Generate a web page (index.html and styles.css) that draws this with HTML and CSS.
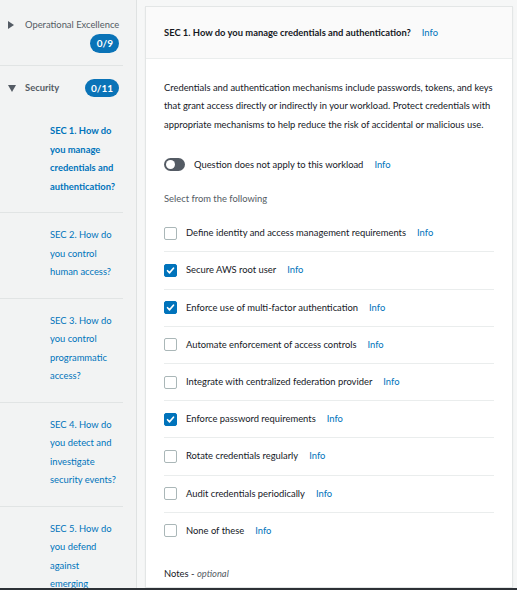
FILE: index.html
```html
<!DOCTYPE html>
<html lang="en">
<head>
<meta charset="utf-8">
<title>Security pillar</title>
<link rel="stylesheet" href="styles.css">
</head>
<body>
<div class="app">
  <aside class="sidebar">
    <div class="pillar pillar-closed">
      <span class="caret-cell"><span class="caret caret-right"></span></span>
      <div class="pillar-body">
        <span class="pillar-name">Operational Excellence</span>
        <span class="badge">0/9</span>
      </div>
    </div>
    <div class="pillar pillar-open">
      <div class="pillar-head">
        <span class="caret-cell"><span class="caret caret-down"></span></span>
        <span class="pillar-name strong">Security</span>
        <span class="badge">0/11</span>
      </div>
      <ul class="questions">
        <li class="question active"><a href="#">SEC 1. How do you manage credentials and authentication?</a></li>
        <li class="question"><a href="#">SEC 2. How do you control human access?</a></li>
        <li class="question"><a href="#">SEC 3. How do you control programmatic access?</a></li>
        <li class="question"><a href="#">SEC 4. How do you detect and investigate security events?</a></li>
        <li class="question"><a href="#">SEC 5. How do you defend against emerging security threats?</a></li>
      </ul>
    </div>
  </aside>
  <main class="content">
    <section class="panel">
      <header class="panel-header">
        <h2>SEC 1. How do you manage credentials and authentication?</h2>
        <a class="info" href="#">Info</a>
      </header>
      <div class="panel-body">
        <p class="desc">Credentials and authentication mechanisms include passwords, tokens, and keys that grant access directly or indirectly in your workload. Protect credentials with appropriate mechanisms to help reduce the risk of accidental or malicious use.</p>
        <div class="toggle-row">
          <span class="toggle"><span class="knob"></span></span>
          <span>Question does not apply to this workload</span>
          <a class="info" href="#">Info</a>
        </div>
        <div class="select-label">Select from the following</div>
        <ul class="choices">
          <li class="choice"><span class="checkbox"></span><span>Define identity and access management requirements</span><a class="info" href="#">Info</a></li>
          <li class="choice"><span class="checkbox checked"><svg viewBox="0 0 13 13" width="13" height="13"><polyline points="3,6.8 5.4,9.2 10,3.8" fill="none" stroke="#fff" stroke-width="2" stroke-linecap="round" stroke-linejoin="round"/></svg></span><span>Secure AWS root user</span><a class="info" href="#">Info</a></li>
          <li class="choice"><span class="checkbox checked"><svg viewBox="0 0 13 13" width="13" height="13"><polyline points="3,6.8 5.4,9.2 10,3.8" fill="none" stroke="#fff" stroke-width="2" stroke-linecap="round" stroke-linejoin="round"/></svg></span><span>Enforce use of multi-factor authentication</span><a class="info" href="#">Info</a></li>
          <li class="choice"><span class="checkbox"></span><span>Automate enforcement of access controls</span><a class="info" href="#">Info</a></li>
          <li class="choice"><span class="checkbox"></span><span>Integrate with centralized federation provider</span><a class="info" href="#">Info</a></li>
          <li class="choice"><span class="checkbox checked"><svg viewBox="0 0 13 13" width="13" height="13"><polyline points="3,6.8 5.4,9.2 10,3.8" fill="none" stroke="#fff" stroke-width="2" stroke-linecap="round" stroke-linejoin="round"/></svg></span><span>Enforce password requirements</span><a class="info" href="#">Info</a></li>
          <li class="choice"><span class="checkbox"></span><span>Rotate credentials regularly</span><a class="info" href="#">Info</a></li>
          <li class="choice"><span class="checkbox"></span><span>Audit credentials periodically</span><a class="info" href="#">Info</a></li>
          <li class="choice"><span class="checkbox"></span><span>None of these</span><a class="info" href="#">Info</a></li>
        </ul>
        <div class="notes">Notes - <em>optional</em></div>
      </div>
    </section>
  </main>
</div>
<div class="footer-bar"></div>
</body>
</html>
```

FILE: styles.css
```css
* { box-sizing: border-box; }
html, body { margin: 0; height: 100%; }
body {
  font-family: Lato, "Liberation Sans", sans-serif;
  font-size: 9.4px;
  color: #16191f;
  background: #f2f3f3;
  display: flex;
  flex-direction: column;
  overflow: hidden;
}
a { text-decoration: none; }
ul { list-style: none; margin: 0; padding: 0; }

.app { flex: 1; display: flex; min-height: 0; overflow: hidden; }

/* Sidebar */
.sidebar {
  width: 137px;
  flex: none;
  background: #f2f3f3;
  border-right: 1px solid #dfe2e2;
}
.pillar { margin-right: 13px; border-bottom: 1px solid #e1e4e4; }
.pillar-closed {
  display: grid;
  grid-template-columns: 25px 1fr;
  padding: 18px 4px 12px 0;
}
.caret-cell { display: flex; align-items: center; padding-left: 8px; height: 14px; }
.caret { width: 0; height: 0; display: block; }
.caret-right {
  border-left: 6px solid #545b64;
  border-top: 4px solid transparent;
  border-bottom: 4px solid transparent;
}
.caret-down {
  border-top: 7px solid #545b64;
  border-left: 4.5px solid transparent;
  border-right: 4.5px solid transparent;
}
.pillar-body { display: flex; flex-direction: column; }
.pillar-name { color: #545b64; line-height: 14px; white-space: nowrap; }
.pillar-name.strong { font-weight: bold; }
.badge {
  display: inline-block;
  background: #0a73b7;
  color: #fff;
  font-weight: bold;
  border-radius: 10px;
  padding: 0 6px;
  height: 19px;
  line-height: 19px;
  min-width: 29px;
  text-align: center;
  font-size: 10px;
}
.pillar-body .badge { align-self: flex-end; margin-top: 2px; }
.pillar-open { border-bottom: none; }
.pillar-head {
  display: grid;
  grid-template-columns: 25px 1fr auto;
  align-items: center;
  padding: 13px 4px 0 0;
}
.pillar-head .badge { height: 18px; line-height: 18px; min-width: 34px; }
.questions { margin-top: 12px; }
.question {
  padding: 13px 4px 16px 50px;
  border-bottom: 1px solid #e1e4e4;
  line-height: 18.5px;
}
.question a { color: #0073bb; }
.question.active a { font-weight: bold; }

/* Main content */
.content {
  flex: 1;
  min-width: 0;
  padding: 6px 4px 0 8px;
  background: #f6f7f7;
}
.panel {
  background: #fff;
  border: 1px solid #e3e6e6;
  height: 100%;
  box-shadow: 0 1px 1px rgba(0,28,36,0.08);
}
.panel-header {
  height: 52px;
  background: #fafafa;
  border-bottom: 1px solid #eaeded;
  display: flex;
  align-items: center;
  gap: 11px;
  padding: 0 18px;
}
.panel-header h2 { margin: 0; font-size: 9.4px; font-weight: bold; }
.info { color: #0073bb; }
.panel-body { padding: 20px 18px 0 18px; }
.desc { margin: 0; line-height: 18.4px; }
.toggle-row {
  display: flex;
  align-items: center;
  height: 18px;
  margin-top: 21px;
}
.toggle {
  width: 21px;
  height: 13px;
  border-radius: 7px;
  background: #545b64;
  display: flex;
  align-items: center;
  padding: 0 2px;
  margin-right: 9px;
}
.knob { width: 9px; height: 9px; border-radius: 50%; background: #fff; }
.toggle-row .info { margin-left: 11px; }
.select-label { margin-top: 17px; line-height: 18px; color: #545b64; }
.choices { margin-top: 7px; }
.choice {
  display: flex;
  align-items: center;
  padding: 9px 0;
  line-height: 18.2px;
  border-bottom: 1px solid #eaeded;
}
.choice:last-child { border-bottom: none; }
.checkbox {
  width: 13px;
  height: 13px;
  border: 1px solid #aab7b8;
  border-radius: 2px;
  margin-right: 9px;
  flex: none;
  display: flex;
  align-items: center;
  justify-content: center;
}
.checkbox.checked { background: #0073bb; border-color: #0073bb; }
.checkbox svg { display: block; }
.choice .info { margin-left: 11px; }
.notes { margin-top: 16px; line-height: 18px; }
.notes em { color: #545b64; }

.footer-bar { height: 2px; flex: none; background: #2d3136; }
```
